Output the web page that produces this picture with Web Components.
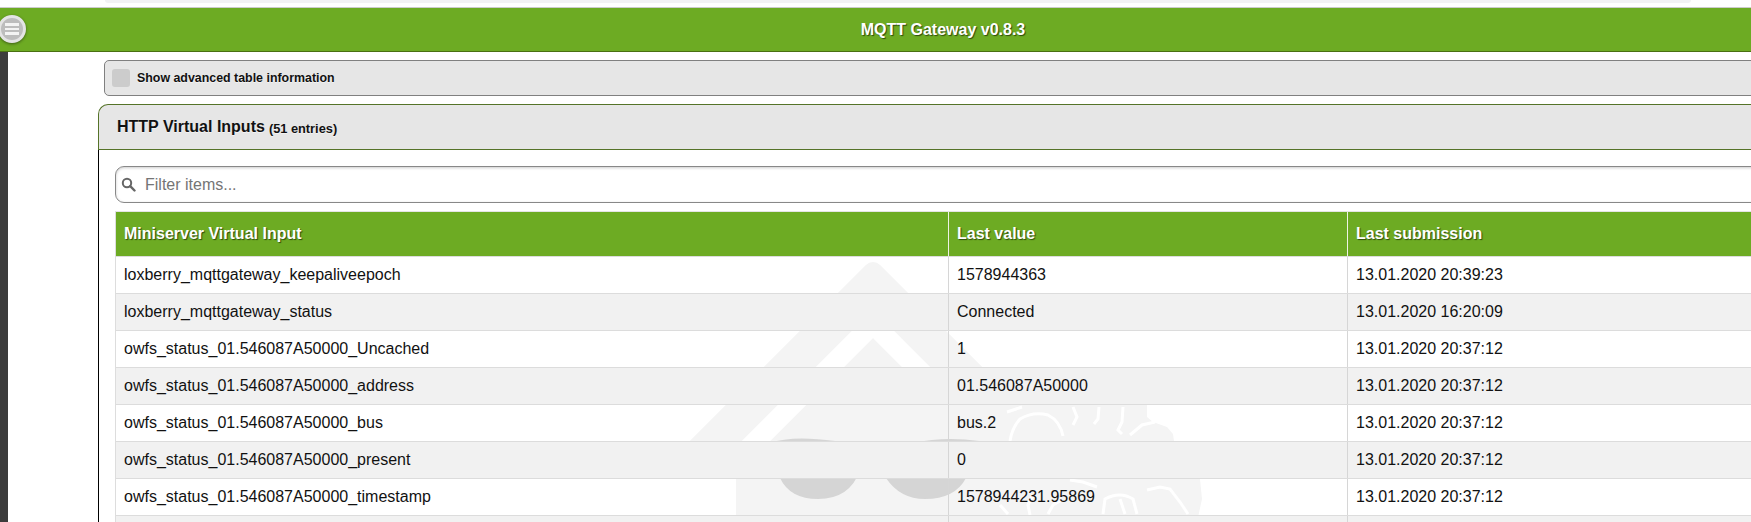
<!DOCTYPE html>
<html>
<head>
<meta charset="utf-8">
<title>MQTT Gateway</title>
<style>
  html { overflow: hidden; background: #fff; }
  body { margin: 0; width: 1886px; font-family: "Liberation Sans", Arial, sans-serif; color: #111; }
</style>
</head>
<body>
<lb-watermark></lb-watermark>
<lb-header>MQTT Gateway v0.8.3</lb-header>
<lb-page>
  <lb-check-panel>Show advanced table information</lb-check-panel>
  <lb-card>
    <span slot="title">HTTP Virtual Inputs</span>
    <span slot="note">(51 entries)</span>
    <lb-filter placeholder="Filter items..."></lb-filter>
    <vi-row head name="Miniserver Virtual Input" value="Last value" time="Last submission"></vi-row>
    <vi-row name="loxberry_mqttgateway_keepaliveepoch" value="1578944363" time="13.01.2020 20:39:23"></vi-row>
    <vi-row alt name="loxberry_mqttgateway_status" value="Connected" time="13.01.2020 16:20:09"></vi-row>
    <vi-row name="owfs_status_01.546087A50000_Uncached" value="1" time="13.01.2020 20:37:12"></vi-row>
    <vi-row alt name="owfs_status_01.546087A50000_address" value="01.546087A50000" time="13.01.2020 20:37:12"></vi-row>
    <vi-row name="owfs_status_01.546087A50000_bus" value="bus.2" time="13.01.2020 20:37:12"></vi-row>
    <vi-row alt name="owfs_status_01.546087A50000_present" value="0" time="13.01.2020 20:37:12"></vi-row>
    <vi-row name="owfs_status_01.546087A50000_timestamp" value="1578944231.95869" time="13.01.2020 20:37:12"></vi-row>
    <vi-row alt></vi-row>
  </lb-card>
</lb-page>

<script>
// background picture of the page, sits behind the table
class LbWatermark extends HTMLElement {
    connectedCallback() {
        this.attachShadow({ mode: "open" }).innerHTML = `
            <style>
                :host { position: absolute; left: 0; top: 0; z-index: -1; }
                svg { display: block; }
            </style>
            <svg width="1400" height="522" viewBox="0 0 1400 522">
                <defs>
                    <clipPath id="roof"><rect x="600" y="250" width="700" height="228"/></clipPath>
                </defs>
                <!-- roof, house body, brain -->
                <path d="M873 272 L620 525 L1126 525 Z" clip-path="url(#roof)"
                      fill="#f4f4f4" stroke="#f4f4f4" stroke-width="20" stroke-linejoin="round"/>
                <rect x="736" y="478" width="400" height="44" fill="#f4f4f4"/>
                <path d="M1000 404 L1147 404 L1147 417 L1153 422 L1167 427 L1173 434 L1174 441 L1190 460 L1200 479 L1202 499 L1197 522 L1000 522 Z" fill="#f4f4f4"/>
                <!-- white chevron under the roof -->
                <path d="M680 517 L873 324 L925 376" fill="none" stroke="#fff" stroke-width="20"/>
                <!-- sunglasses -->
                <path d="M770 443 Q792 435 835 441 Q858 444 860 470 Q850 499 818 499 Q790 499 780 478 Z" fill="#d5d5d5"/>
                <path d="M913 443 Q945 436 979 441 Q990 450 966 478 Q955 499 925 499 Q900 499 886 478 Z" fill="#d5d5d5"/>
                <!-- brain folds -->
                <g fill="none" stroke="#fff" stroke-width="3">
                    <path d="M1010 441 Q1012 428 1020 419 Q1033 411 1048 415 Q1060 421 1063 436"/>
                    <path d="M1022 407 L1007 412"/>
                    <path d="M1073 407 L1077 417 L1073 425"/>
                    <path d="M1099 407 L1098 419 L1094 424"/>
                    <path d="M1123 407 L1122 422 L1118 430 L1122 434"/>
                    <path d="M1130 435 L1142 425 L1155 422"/>
                    <path d="M1000 505 L1008 514"/>
                    <path d="M1030 515 L1028 505 L1033 495"/>
                    <path d="M1048 514 L1053 505 L1062 500"/>
                    <path d="M1070 480 L1083 482 L1097 487"/>
                    <path d="M1103 514 L1105 499 Q1120 491 1133 499 L1137 514"/>
                    <path d="M1120 499 L1125 514"/>
                    <path d="M1147 490 L1160 487 L1170 489 L1180 502 L1188 514"/>
                </g>
            </svg>
        `;
    }
}

class LbHeader extends HTMLElement {
    connectedCallback() {
        this.attachShadow({ mode: "open" }).innerHTML = `
            <style>
                :host { display: block; position: relative; }
                .top { height: 7px; }
                .strip { height: 3px; margin: 0 195px 0 105px; background: #f2f2f4; border-radius: 0 0 8px 8px; }
                .bar {
                    height: 43px;
                    display: flex; align-items: center; justify-content: center;
                    background: #6dab23;
                    border-top: 1px solid #ccc;
                    border-bottom: 1px solid #4a7012;
                    color: #fff; font-weight: bold; font-size: 16px;
                    text-shadow: 1px 1px 1px #2d4a0c;
                }
                .menu {
                    position: absolute; left: -2px; top: 15px;
                    width: 28px; height: 28px; box-sizing: border-box;
                    border: 3px solid #e4e4e4; border-radius: 50%;
                    background: #bdbdbd;
                    box-shadow: 0 1px 3px rgba(0,0,0,.45);
                    display: flex; flex-direction: column; align-items: center; justify-content: center; gap: 2px;
                }
                .menu i { display: block; width: 14px; height: 2.5px; background: #f4f4f4; }
            </style>
            <div class="top"><div class="strip"></div></div>
            <div class="bar"><slot></slot></div>
            <div class="menu"><i></i><i></i><i></i></div>
        `;
    }
}

class LbPage extends HTMLElement {
    connectedCallback() {
        this.attachShadow({ mode: "open" }).innerHTML = `
            <style>
                :host { display: flex; min-height: 470px; }
                .side { width: 8px; flex: none; background: #3c3c3c; }
                .main { flex: 1; min-width: 0; padding: 8px 0 0 90px; display: flex; flex-direction: column; gap: 8px; }
            </style>
            <div class="side"></div>
            <div class="main"><slot></slot></div>
        `;
    }
}

class LbCheckPanel extends HTMLElement {
    connectedCallback() {
        this.attachShadow({ mode: "open" }).innerHTML = `
            <style>
                :host {
                    display: flex; align-items: center; gap: 7px;
                    height: 36px; box-sizing: border-box;
                    margin-left: 6px; padding-left: 7px;
                    background: #e6e6e6;
                    border: 1px solid #808080; border-radius: 5px;
                    font-weight: bold; font-size: 12.4px;
                    text-shadow: 0 1px 0 #f3f3f3;
                }
                .box { width: 18px; height: 18px; background: #ccc; border-radius: 3px; }
            </style>
            <span class="box"></span>
            <slot></slot>
        `;
    }
}

class LbCard extends HTMLElement {
    connectedCallback() {
        this.attachShadow({ mode: "open" }).innerHTML = `
            <style>
                :host { display: block; }
                .head {
                    height: 46px; box-sizing: border-box;
                    display: flex; align-items: center; gap: 4px;
                    padding-left: 18px;
                    background: #e6e6e6;
                    border: 1px solid #557328; border-right: 0;
                    border-radius: 10px 0 0 0;
                    font-weight: bold; font-size: 16px;
                    text-shadow: 0 1px 0 #f3f3f3;
                }
                .note { font-size: 12.8px; padding-top: 2px; }
                .body { border-left: 1px solid #000; padding: 16px 0 0 16px; }
            </style>
            <div class="head"><slot name="title"></slot><span class="note"><slot name="note"></slot></span></div>
            <div class="body"><slot></slot></div>
        `;
    }
}

class LbFilter extends HTMLElement {
    connectedCallback() {
        const text = this.getAttribute("placeholder") || "";
        this.attachShadow({ mode: "open" }).innerHTML = `
            <style>
                :host {
                    display: flex; align-items: center; gap: 9px;
                    height: 37px; box-sizing: border-box;
                    margin-bottom: 8px; padding-left: 5px;
                    background: #fff;
                    border: 1px solid #888; border-radius: 9px;
                    box-shadow: inset 0 1px 3px rgba(0,0,0,.2);
                    font-size: 16px; color: #757575;
                }
                svg { display: block; }
            </style>
            <svg width="15" height="15" viewBox="0 0 15 15">
                <circle cx="6" cy="6" r="4.2" fill="none" stroke="#666" stroke-width="2"/>
                <path d="M9.2 9.2 L13.5 13.5" stroke="#666" stroke-width="2.4" stroke-linecap="round"/>
            </svg>
            <span>${text}</span>
        `;
    }
}

class ViRow extends HTMLElement {
    connectedCallback() {
        this.attachShadow({ mode: "open" }).innerHTML = `
            <style>
                :host {
                    display: grid; grid-template-columns: 833px 399px 1fr;
                    height: 37px; box-sizing: border-box;
                    border-left: 1px solid #ddd; border-bottom: 1px solid #dcdcdc;
                    font-size: 16px; color: #111;
                }
                :host([alt]) { background: #f1f1f1; }
                :host([head]) {
                    height: 46px; border-top: 1px solid #e4e4e4;
                    background: #6dab23; color: #fff; font-weight: bold;
                    text-shadow: 1px 1px 1px #2d4a0c;
                }
                .c { display: flex; align-items: center; padding-left: 8px; white-space: nowrap; overflow: hidden; }
                .c + .c { border-left: 1px solid #d6d6d6; margin-left: -1px; }
                :host([head]) .c + .c { border-left-color: #eef3e4; }
            </style>
            <div class="c">${this.getAttribute("name") || ""}</div>
            <div class="c">${this.getAttribute("value") || ""}</div>
            <div class="c">${this.getAttribute("time") || ""}</div>
        `;
    }
}

customElements.define("lb-watermark", LbWatermark);
customElements.define("lb-header", LbHeader);
customElements.define("lb-page", LbPage);
customElements.define("lb-check-panel", LbCheckPanel);
customElements.define("lb-card", LbCard);
customElements.define("lb-filter", LbFilter);
customElements.define("vi-row", ViRow);
</script>
</body>
</html>
